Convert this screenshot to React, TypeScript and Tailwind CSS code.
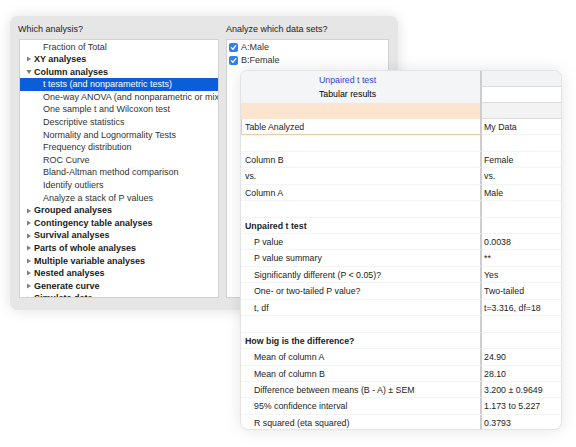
const analyses: { label: string; kind: 'item' | 'group' | 'open' | 'selected' }[] = [
  { label: 'Fraction of Total', kind: 'item' },
  { label: 'XY analyses', kind: 'group' },
  { label: 'Column analyses', kind: 'open' },
  { label: 't tests (and nonparametric tests)', kind: 'selected' },
  { label: 'One-way ANOVA (and nonparametric or mixed)', kind: 'item' },
  { label: 'One sample t and Wilcoxon test', kind: 'item' },
  { label: 'Descriptive statistics', kind: 'item' },
  { label: 'Normality and Lognormality Tests', kind: 'item' },
  { label: 'Frequency distribution', kind: 'item' },
  { label: 'ROC Curve', kind: 'item' },
  { label: 'Bland-Altman method comparison', kind: 'item' },
  { label: 'Identify outliers', kind: 'item' },
  { label: 'Analyze a stack of P values', kind: 'item' },
  { label: 'Grouped analyses', kind: 'group' },
  { label: 'Contingency table analyses', kind: 'group' },
  { label: 'Survival analyses', kind: 'group' },
  { label: 'Parts of whole analyses', kind: 'group' },
  { label: 'Multiple variable analyses', kind: 'group' },
  { label: 'Nested analyses', kind: 'group' },
  { label: 'Generate curve', kind: 'group' },
  { label: 'Simulate data', kind: 'group' },
];

// rows of the results sheet: label, value, indent level, bold
const results: { label: string; value: string; indent?: boolean; bold?: boolean }[] = [
  { label: '', value: '' },
  { label: 'Column B', value: 'Female' },
  { label: 'vs.', value: 'vs.' },
  { label: 'Column A', value: 'Male' },
  { label: '', value: '' },
  { label: 'Unpaired t test', value: '', bold: true },
  { label: 'P value', value: '0.0038', indent: true },
  { label: 'P value summary', value: '**', indent: true },
  { label: 'Significantly different (P < 0.05)?', value: 'Yes', indent: true },
  { label: 'One- or two-tailed P value?', value: 'Two-tailed', indent: true },
  { label: 't, df', value: 't=3.316, df=18', indent: true },
  { label: '', value: '' },
  { label: 'How big is the difference?', value: '', bold: true },
  { label: 'Mean of column A', value: '24.90', indent: true },
  { label: 'Mean of column B', value: '28.10', indent: true },
  { label: 'Difference between means (B - A) ± SEM', value: '3.200 ± 0.9649', indent: true },
  { label: '95% confidence interval', value: '1.173 to 5.227', indent: true },
  { label: 'R squared (eta squared)', value: '0.3793', indent: true },
];

function Triangle({ open }: { open?: boolean }) {
  return (
    <svg width="6" height="6" viewBox="0 0 6 6" className="mr-[2px] shrink-0">
      {open ? <path d="M0.5 1 L5.5 1 L3 5 Z" fill="#777777" /> : <path d="M1 0.5 L5 3 L1 5.5 Z" fill="#808080" />}
    </svg>
  );
}

function Check() {
  return (
    <span className="w-[9px] h-[9px] rounded-[2px] bg-[#2f7ff0] flex items-center justify-center mr-[3px] shrink-0">
      <svg width="7" height="7" viewBox="0 0 8 8">
        <path d="M1.5 4.2 L3.3 6 L6.6 1.8" stroke="white" strokeWidth="1.4" fill="none" strokeLinecap="round" strokeLinejoin="round" />
      </svg>
    </span>
  );
}

function AnalysisWindow() {
  return (
    <div className="absolute left-[10px] top-[16px] w-[388px] h-[294px] rounded-[8px] bg-[#e6e6e6] shadow-[0_0_14px_rgba(0,0,0,0.12)] pt-[7px] pl-[9px] flex gap-[7px] text-[9px] text-[#333333]">
      <div className="flex flex-col w-[200px]">
        <div className="h-[12px] leading-[12px] mb-[4px] -ml-[1px] text-[#222222]">Which analysis?</div>
        <div className="h-[259px] bg-white border border-[#d2d2d2] overflow-hidden pt-[0.5px]">
          {analyses.map((a) => (
            <div
              key={a.label}
              className={
                a.kind === 'selected'
                  ? 'h-[12.6px] leading-[12.6px] bg-[#0b5ed7] text-white pl-[23px] whitespace-nowrap'
                  : a.kind === 'item'
                  ? 'h-[12.6px] leading-[12.6px] pl-[23px] whitespace-nowrap'
                  : 'h-[12.6px] leading-[12.6px] pl-[6px] flex items-center font-bold text-[#1b1b1b] whitespace-nowrap'
              }
            >
              {(a.kind === 'group' || a.kind === 'open') && <Triangle open={a.kind === 'open'} />}
              {a.label}
            </div>
          ))}
        </div>
      </div>
      <div className="flex flex-col w-[163px]">
        <div className="h-[12px] leading-[12px] mb-[4px] text-[#222222]">Analyze which data sets?</div>
        <div className="h-[259px] bg-white border border-[#d2d2d2] pt-[1px] pl-[2px]">
          <div className="h-[13px] flex items-center">
            <Check />
            A:Male
          </div>
          <div className="h-[13px] flex items-center">
            <Check />
            B:Female
          </div>
        </div>
      </div>
    </div>
  );
}

function ResultsSheet() {
  return (
    <div className="absolute left-[240px] top-[70px] w-[322px] h-[360px] rounded-[8px] bg-white border border-[#e3e3e3] shadow-[0_0_16px_rgba(0,0,0,0.1)] overflow-hidden text-[8.8px] text-[#1c1c1c]">
      <div className="flex">
        <div className="w-[241px] h-[32px] bg-[#f4f5f7] border-r-2 border-[#cdcdcd] flex flex-col items-center justify-center pr-[26px]">
          <div className="h-[14px] leading-[14px] text-[#2f45d6]">Unpaired t test</div>
          <div className="h-[14px] leading-[14px] text-black">Tabular results</div>
        </div>
        <div className="flex-1 flex flex-col">
          <div className="h-[16px] bg-[#f2f3f5] border-b border-[#dcdcdc]" />
          <div className="h-[16px] border-b border-[#dcdcdc]" />
        </div>
      </div>
      <div className="flex h-[16px]">
        <div className="w-[241px] bg-[#fbe5ce] border-r-2 border-[#cdcdcd]" />
        <div className="flex-1 bg-[#f3f3f3] border-b border-[#dcdcdc]" />
      </div>
      <div className="flex h-[16.4px]">
        <div className="w-[241px] border-r-2 border-[#cdcdcd] leading-[16px] pl-[3px] border-l border-b border-l-[#f3c9a0] border-b-[#f3c9a0]">
          Table Analyzed
        </div>
        <div className="flex-1 leading-[17px] pl-[2px] border-b border-[#f3f3f3]">My Data</div>
      </div>
      {results.map((r, i) => (
        <div key={i} className="flex h-[16.44px]">
          <div
            className={`w-[241px] border-r-2 border-r-[#cdcdcd] border-b border-b-[#f4f4f4] leading-[16px] whitespace-nowrap ${
              r.indent ? 'pl-[13px]' : 'pl-[4px]'
            } ${r.bold ? 'font-bold' : ''}`}
          >
            {r.label}
          </div>
          <div className="flex-1 leading-[16px] pl-[2px] border-b border-[#f4f4f4] whitespace-nowrap">{r.value}</div>
        </div>
      ))}
    </div>
  );
}

export default function App() {
  return (
    <div className="relative w-[576px] h-[447px] bg-white overflow-hidden font-['Liberation_Sans',Arial,sans-serif]">
      <AnalysisWindow />
      <ResultsSheet />
    </div>
  );
}
